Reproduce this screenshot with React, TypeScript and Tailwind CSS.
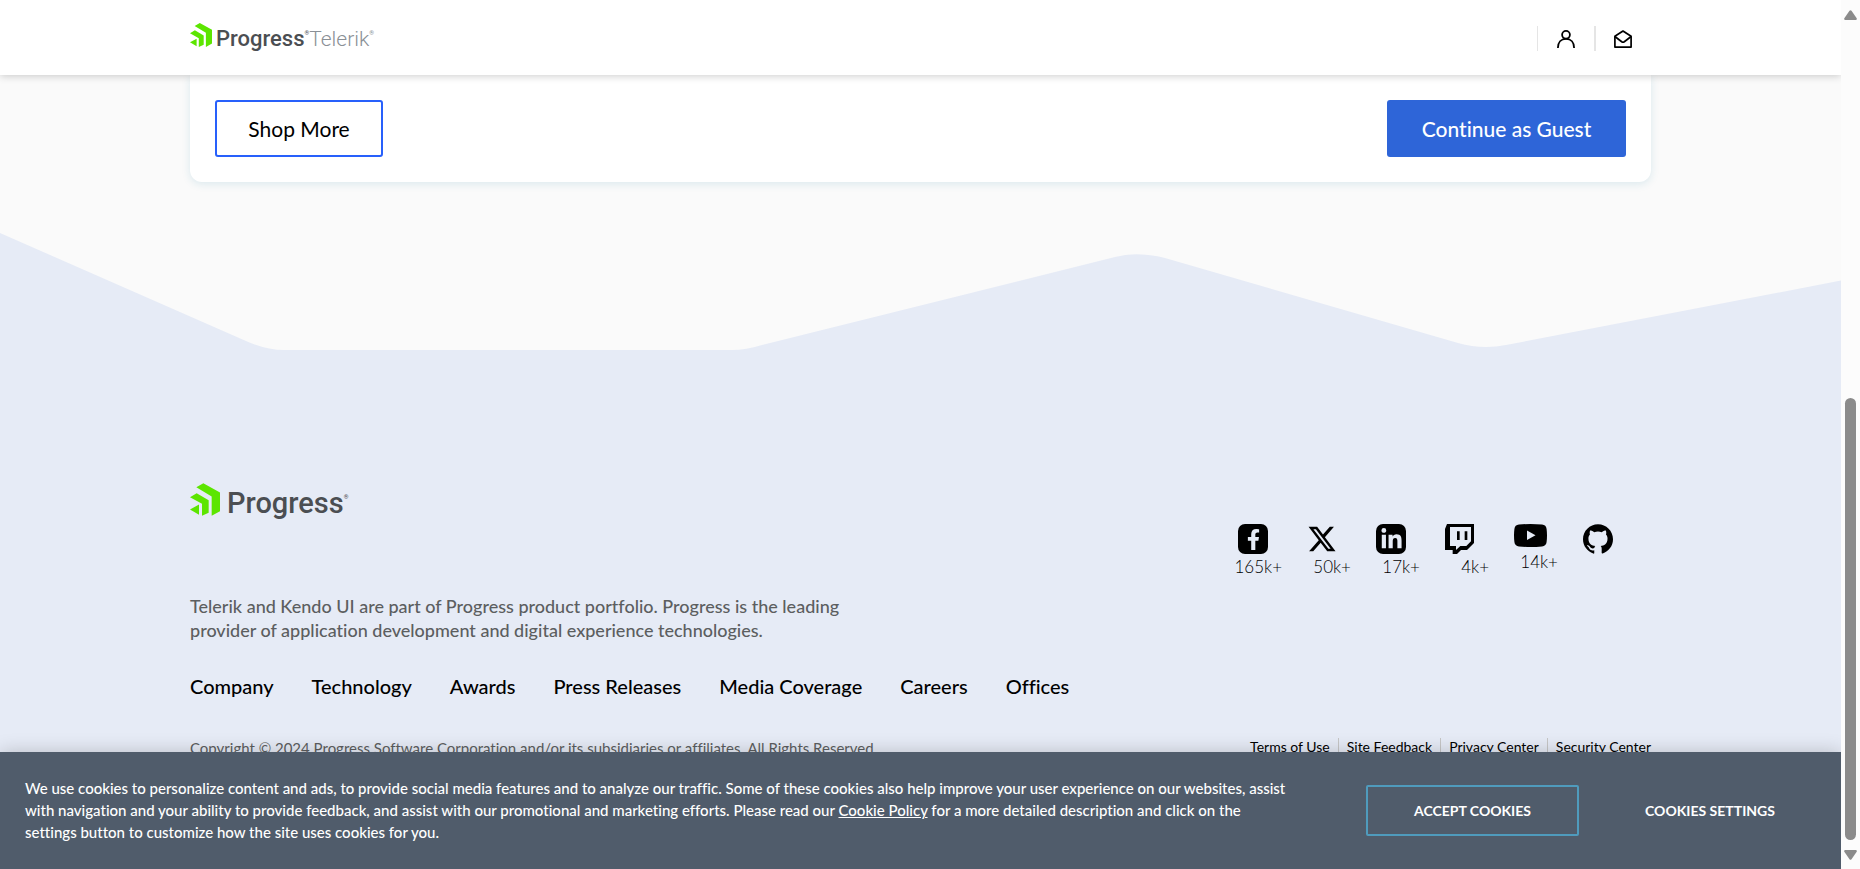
import type { ReactNode } from "react";
import { FaFacebookF, FaLinkedinIn } from "react-icons/fa";
import { FaXTwitter } from "react-icons/fa6";
import { SiGithub } from "react-icons/si";

function ProgressMark({ className }: { className: string }) {
  return (
    <svg viewBox="18 13 90 98" className={className} fill="#5ce500" aria-hidden="true">
      <path d="M37 25 58 13 108 41V97L83 111V53Z" />
      <path d="M18 55 38 43 74 64V102L54 111V75Z" />
      <path d="M18 92 45 77V108Z" />
    </svg>
  );
}

const socials: { name: string; count?: string; icon: ReactNode }[] = [
  {
    name: "Facebook",
    count: "165k+",
    icon: (
      <span className="flex size-[30px] items-center justify-center rounded-[7px] bg-black text-[#e6ebf6]">
        <FaFacebookF size={21} />
      </span>
    ),
  },
  {
    name: "X",
    count: "50k+",
    icon: (
      <span className="flex size-[30px] items-center justify-center">
        <FaXTwitter size={30} />
      </span>
    ),
  },
  {
    name: "LinkedIn",
    count: "17k+",
    icon: (
      <span className="flex size-[30px] items-center justify-center rounded-[7px] bg-black text-[#e6ebf6]">
        <FaLinkedinIn size={23} />
      </span>
    ),
  },
  {
    name: "Twitch",
    count: "4k+",
    icon: (
      <svg viewBox="0 0 87 90" className="h-[30px] w-[29px]" aria-hidden="true">
        <path
          fillRule="evenodd"
          d="M6 0H87V57L66 78H48L36 90H23V78H0V15ZM15 9V66H33V78L46 66H64L78 52V9ZM36 22H44V48H36ZM59 22H67V48H59Z"
        />
      </svg>
    ),
  },
  {
    name: "YouTube",
    count: "14k+",
    icon: (
      <svg viewBox="0 0 33 25" className="h-[25px] w-[33px]" aria-hidden="true">
        <path d="M5 .6Q16.500-.6 28 .6 32.200 1 32.600 5 33.400 11.500 32.600 18 32.200 22 28 22.400 16.500 23.600 5 22.400.8 22 .4 18-.4 11.500.4 5 .8 1 5 .6Z" />
        <path fill="#e6ebf6" d="M13 6.500V16L21.500 11.200Z" />
      </svg>
    ),
  },
  { name: "GitHub", icon: <SiGithub size={30} /> },
];

const footerLinks = ["Company", "Technology", "Awards", "Press Releases", "Media Coverage", "Careers", "Offices"];
const legalLinks = ["Terms of Use", "Site Feedback", "Privacy Center", "Security Center"];

function Header() {
  return (
    <header className="relative z-10 bg-white shadow-[0_1px_8px_rgba(0,0,0,0.2)]">
      <div className="mx-auto flex h-[75px] max-w-[1461px] items-center justify-between pt-[2px]">
        <a href="#home" className="flex items-center gap-1 font-['Roboto',sans-serif]">
          <ProgressMark className="-mt-2 h-6 w-[22px]" />
          <span className="flex leading-6">
            <span className="text-[22px] font-medium text-[#4b4e52]">Progress</span>
            <span className="text-[6px] leading-3 text-[#4b4e52]">®</span>
            <span className="text-[21px] font-light text-[#8a9096]">Telerik</span>
            <span className="text-[6px] leading-3 text-[#8a9096]">®</span>
          </span>
        </a>
        <div className="mr-[19px] flex items-center">
          <span className="h-[25px] w-px bg-[#e5e5e5]" />
          <a href="#account" aria-label="Your account" className="px-[19px]">
            <svg viewBox="0 0 18 18" className="size-[18px]" fill="none" stroke="black" strokeWidth="1.8" aria-hidden="true">
              <circle cx="9" cy="4.800" r="3.900" />
              <path d="M.9 18C.9 12.500 4 8.900 9 8.900S17.100 12.500 17.100 18" />
            </svg>
          </a>
          <span className="h-[25px] w-[2px] bg-[#e5e5e5]" />
          <a href="#contact" aria-label="Contact us" className="pl-[18px]">
            <svg
              viewBox="0 0 18 18"
              className="size-[18px]"
              fill="none"
              stroke="black"
              strokeWidth="1.7"
              strokeLinejoin="round"
              aria-hidden="true"
            >
              <path d="M.9 6.300 9 1 17.100 6.300V17.100H.9Z" />
              <path d="M.9 6.500 7.700 11.700Q9 12.600 10.300 11.700L17.100 6.500" />
            </svg>
          </a>
        </div>
      </div>
    </header>
  );
}

function Footer() {
  return (
    <footer>
      <svg viewBox="0 0 1841 117" preserveAspectRatio="none" className="block h-[117px] w-full" fill="#e6ebf6" aria-hidden="true">
        <path d="M0 0 246 108Q266 117 284 117H732Q746 117 762 112L1115 24Q1137 18 1165 25L1458 110Q1482 117 1506 112L1841 47.500V117H0Z" />
      </svg>
      <div className="bg-[#e6ebf6] pt-[132px] pb-24">
        <div className="mx-auto max-w-[1461px]">
          <div className="flex items-start justify-between">
            <div>
              <a href="#progress" className="flex items-center gap-[7px] pt-px font-['Roboto',sans-serif] text-[#4b4e52]">
                <ProgressMark className="-mt-2 h-[33px] w-[30px]" />
                <span className="flex text-[29px] leading-10 font-medium">
                  Progress<span className="text-[6px] leading-7">®</span>
                </span>
              </a>
              <p className="mt-[71px] max-w-[680px] text-[18px] leading-6 font-medium text-[#5c5e60]">
                Telerik and Kendo UI are part of Progress product portfolio. Progress is the leading provider of application
                development and digital experience technologies.
              </p>
            </div>
            <ul className="mt-[42px] mr-6 flex gap-[25px]">
              {socials.map((s) => (
                <li key={s.name} className="w-11">
                  <a href={`#${s.name.toLowerCase()}`} aria-label={s.name} className="flex flex-col">
                    {s.icon}
                    {s.count && <span className="mt-px self-end text-[17px] leading-6 font-light">{s.count}</span>}
                  </a>
                </li>
              ))}
            </ul>
          </div>
          <nav className="mt-[30px] flex gap-[38px] text-[20px] leading-7 font-medium">
            {footerLinks.map((l) => (
              <a key={l} href="#footer">
                {l}
              </a>
            ))}
          </nav>
          <div className="mt-9 flex items-start justify-between">
            <p className="text-[15px] leading-6 text-[#5c5e60]">
              Copyright © 2024 Progress Software Corporation and/or its subsidiaries or affiliates. All Rights Reserved.
            </p>
            <ul className="mt-[2px] flex divide-x divide-[#c6c6c6] text-[14px] leading-[18px]">
              {legalLinks.map((l) => (
                <li key={l} className="px-2 last:pr-0">
                  <a href="#legal">{l}</a>
                </li>
              ))}
            </ul>
          </div>
        </div>
      </div>
    </footer>
  );
}

function CookieBanner() {
  return (
    <section
      aria-label="Cookie notice"
      className="absolute inset-x-0 bottom-0 z-20 flex items-center bg-[#505c6b] pt-[25px] pr-16 pb-[26px] pl-[25px] text-white shadow-[0_0_18px_rgba(0,0,0,0.2)]"
    >
      <p className="mr-auto max-w-[1266px] text-[15px] leading-[22px] font-medium">
        We use cookies to personalize content and ads, to provide social media features and to analyze our traffic. Some of
        these cookies also help improve your user experience on our websites, assist with navigation and your ability to provide
        feedback, and assist with our promotional and marketing efforts. Please read our{" "}
        <a href="#cookie-policy" className="underline">
          Cookie Policy
        </a>{" "}
        for a more detailed description and click on the settings button to customize how the site uses cookies for you.
      </p>
      <button className="h-[51px] w-[213px] shrink-0 rounded-[2px] border-2 border-[#4f9bbd] text-[14px] font-bold">
        ACCEPT COOKIES
      </button>
      <button className="ml-16 h-[51px] w-[134px] shrink-0 text-[14px] font-bold">COOKIES SETTINGS</button>
    </section>
  );
}

function ScrollRail() {
  return (
    <div className="flex w-[19px] shrink-0 flex-col items-center bg-[#fcfcfc] pt-[10px] pb-[9px]" aria-hidden="true">
      <svg viewBox="0 0 13 10" className="h-[10px] w-[13px]" fill="#8b8b8b">
        <path d="M5.500.8Q6.500-.4 7.500.8L12.700 8.200Q13.200 9.800 11.800 10H1.200Q-.2 9.800.3 8.200Z" />
      </svg>
      <div className="mt-auto mb-[10px] h-[52%] w-[11px] rounded-full bg-[#8b8b8b]" />
      <svg viewBox="0 0 13 10" className="h-[10px] w-[13px]" fill="#8b8b8b">
        <path d="M5.500 9.200Q6.500 10.400 7.500 9.200L12.700 1.800Q13.200.2 11.800 0H1.200Q-.2.2.3 1.800Z" />
      </svg>
    </div>
  );
}

export default function App() {
  return (
    <div className="flex h-screen overflow-hidden font-['Lato',sans-serif] text-black [font-variant-ligatures:none]">
      <div className="relative min-w-0 flex-1 overflow-hidden bg-[#fafafa]">
        <Header />
        <main className="mx-auto mb-[51px] max-w-[1461px]">
          <div className="flex justify-between rounded-b-xl bg-white p-[25px] shadow-[0_2px_8px_rgba(30,130,160,0.14)]">
            <button className="h-[57px] min-w-[168px] rounded-[3px] border-2 border-[#2860fb] px-7 text-[21px]">Shop More</button>
            <button className="h-[57px] min-w-[239px] rounded-[3px] bg-[#2e65d8] px-7 text-[21px] font-medium text-white">
              Continue as Guest
            </button>
          </div>
        </main>
        <Footer />
        <CookieBanner />
      </div>
      <ScrollRail />
    </div>
  );
}
